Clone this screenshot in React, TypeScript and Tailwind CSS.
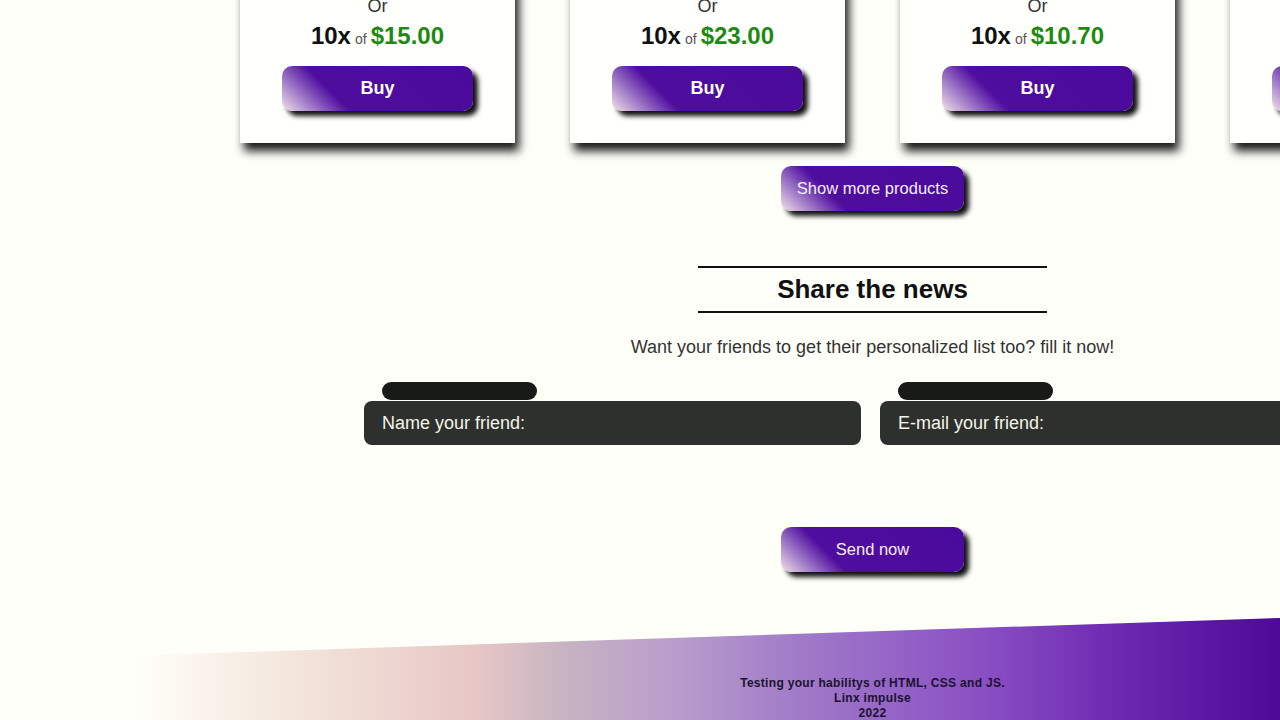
import React from "react";

const cards = ["$15.00", "$23.00", "$10.70", "$12.00"];

const btnGrad =
  "bg-[linear-gradient(45deg,#f3e2e6_0%,#a27cc8_14%,#4f0d9e_29%,#4a0a9c_100%)]";

function Card({ price }: { price: string }) {
  return (
    <div className="w-[275px] shrink-0 bg-[#fffffc] pt-[280px] pb-[32px] flex flex-col items-center shadow-[4px_8px_9px_rgba(0,0,0,0.9)]">
      <div className="text-[18px] leading-[21px] text-[#333]">Or</div>
      <div className="mt-[8px] leading-[22px] flex items-baseline gap-[4px]">
        <span className="text-[24px] font-bold text-[#111]">10x</span>
        <span className="text-[14px] text-[#555]">of</span>
        <span className="text-[24px] font-bold text-[#1e8a12]">{price}</span>
      </div>
      <button
        className={`mt-[16px] w-[191px] h-[45px] rounded-[10px] ${btnGrad} text-white text-[18px] font-bold shadow-[5px_5px_5px_#111]`}
      >
        Buy
      </button>
    </div>
  );
}

export default function App() {
  return (
    <div
      className="w-[1280px] h-[720px] overflow-hidden bg-[#fffffa] relative"
      style={{ fontFamily: '"Liberation Sans", Arial, sans-serif' }}
    >
      <div className="w-[1745px] -mt-[284px] flex flex-col items-center">
        <div className="flex gap-[55px]">
          {cards.map((p) => (
            <Card key={p} price={p} />
          ))}
        </div>
        <button
          className={`mt-[23px] w-[183px] h-[45px] rounded-[10px] ${btnGrad} text-[#f4eefa] text-[16.5px] shadow-[5px_5px_5px_#111]`}
        >
          Show more products
        </button>

        <h2 className="mt-[55px] w-[349px] h-[47px] border-y-2 border-[#111] flex items-center justify-center text-[26px] font-bold text-[#111]">
          Share the news
        </h2>
        <p className="mt-[23px] text-[18px] leading-[22px] text-[#333]">
          Want your friends to get their personalized list too? fill it now!
        </p>

        <div className="mt-[24px] mr-[4px] flex gap-[19px]">
          {["Name your friend:", "E-mail your friend:"].map((l) => (
            <div key={l} className="flex flex-col">
              <div className="ml-[18px] w-[155px] h-[18px] rounded-[9px] bg-[#171a17]" />
              <div className="mt-[1px] w-[497px] h-[44px] rounded-[8px] bg-[#2d302c] flex items-center px-[18px] text-[18px] text-[#f4f4ea]">
                {l}
              </div>
            </div>
          ))}
        </div>

        <button
          className={`mt-[82px] w-[183px] h-[45px] rounded-[10px] ${btnGrad} text-[#f4eefa] text-[16.5px] shadow-[5px_5px_5px_#111]`}
        >
          Send now
        </button>

        <footer className="mt-[46px] w-full h-[130px] relative">
          <div className="absolute inset-0 [clip-path:polygon(0_100%,0_42px,1280px_0,100%_0,100%_100%)] bg-[linear-gradient(90deg,rgba(255,255,250,0)_130px,#f3e4da_300px,#e6c6c6_480px,#c8b4c2_560px,#b89ccc_680px,#a07ac8_800px,#8a50c4_980px,#6d28b0_1120px,#4c0a96_1280px,#4c0a96_100%)]" />
          <div className="relative pt-[58px] flex flex-col items-center text-[12px] leading-[15px] font-bold text-[#1c1230] tracking-[0.3px]">
            <span>Testing your habilitys of HTML, CSS and JS.</span>
            <span>Linx impulse</span>
            <span>2022</span>
          </div>
        </footer>
      </div>
    </div>
  );
}
